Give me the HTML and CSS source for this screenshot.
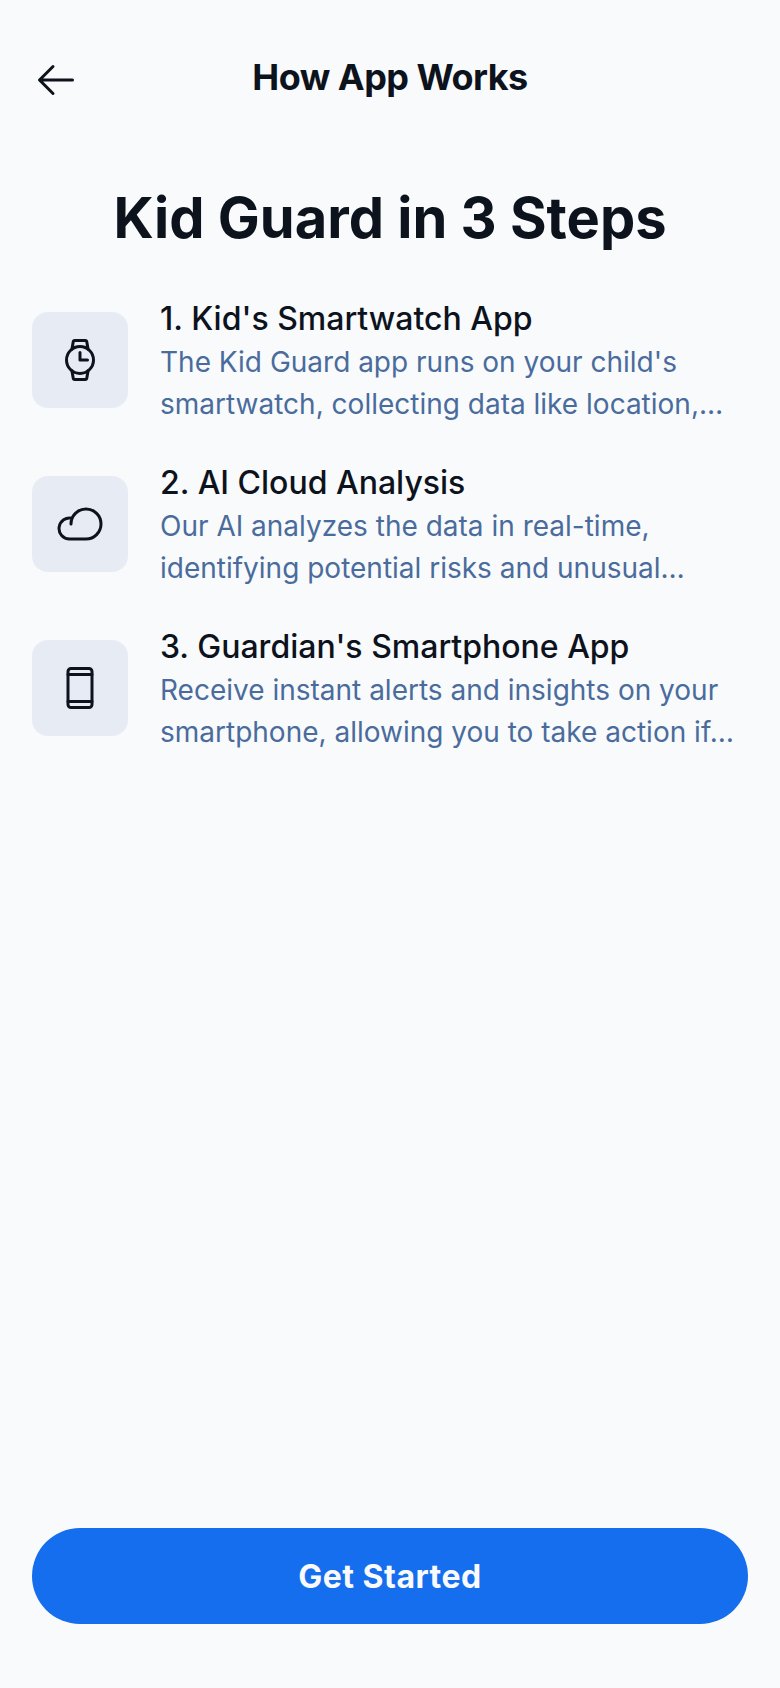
FILE: index.html
```html
<!DOCTYPE html>
<html lang="en">
<head>
<meta charset="utf-8">
<title>How App Works</title>
<link rel="stylesheet" href="styles.css">
</head>
<body>
<div class="screen">
  <header class="topbar">
    <button class="back" aria-label="Back">
      <svg width="48" height="48" viewBox="0 0 256 256" fill="currentColor"><path d="M224,128a8,8,0,0,1-8,8H59.31l58.35,58.34a8,8,0,0,1-11.32,11.32l-72-72a8,8,0,0,1,0-11.32l72-72a8,8,0,0,1,11.32,11.32L59.31,120H216A8,8,0,0,1,224,128Z"/></svg>
    </button>
    <h2 class="topbar-title">How App Works</h2>
  </header>
  <h1 class="headline">Kid Guard in 3 Steps</h1>
  <main>
    <section class="step">
      <div class="tile"><svg width="48" height="48" viewBox="0 0 256 256" fill="none" stroke="currentColor" stroke-width="16" stroke-linecap="round" stroke-linejoin="round"><circle cx="128" cy="128" r="72"/><path d="M128 88v40h40M85 70l7-39a8 8 0 0 1 8-7h56a8 8 0 0 1 8 7l7 39M85 186l7 39a8 8 0 0 0 8 7h56a8 8 0 0 0 8-7l7-39"/></svg></div>
      <div class="step-text">
        <p class="step-title">1. Kid's Smartwatch App</p>
        <p class="step-body">The Kid Guard app runs on your child's<br>smartwatch, collecting data like location,…</p>
      </div>
    </section>
    <section class="step">
      <div class="tile"><svg width="48" height="48" viewBox="0 0 256 256" fill="none" stroke="currentColor" stroke-width="16" stroke-linecap="round" stroke-linejoin="round"><path d="M80 128a80 80 0 1 1 80 80H72a56 56 0 1 1 13.9-110.3"/></svg></div>
      <div class="step-text">
        <p class="step-title">2. AI Cloud Analysis</p>
        <p class="step-body">Our AI analyzes the data in real-time,<br>identifying potential risks and unusual…</p>
      </div>
    </section>
    <section class="step">
      <div class="tile"><svg width="48" height="48" viewBox="0 0 256 256" fill="none" stroke="currentColor" stroke-width="16" stroke-linecap="round" stroke-linejoin="round"><rect x="64" y="24" width="128" height="208" rx="16"/><path d="M64 56h128M64 200h128"/></svg></div>
      <div class="step-text">
        <p class="step-title">3. Guardian's Smartphone App</p>
        <p class="step-body">Receive instant alerts and insights on your<br>smartphone, allowing you to take action if…</p>
      </div>
    </section>
  </main>
  <footer class="footer"><button class="cta">Get Started</button></footer>
</div>
</body>
</html>
```
FILE: styles.css
```css
* { box-sizing: border-box; margin: 0; }
body { background: #f9fafc; color: #0d131c; font-family: Inter, sans-serif; }
button { border: 0; padding: 0; font: inherit; color: inherit; background: none; }
svg { display: block; }
.screen { display: flex; flex-direction: column; height: 1688px; }
.topbar { display: flex; align-items: center; justify-content: space-between; padding: 32px 32px 16px; }
.back { display: flex; align-items: center; width: 96px; height: 96px; }
.topbar-title { flex: 1; padding-right: 96px; text-align: center; font-size: 36px; line-height: 45px; font-weight: 700; letter-spacing: -0.54px; padding-bottom: 5px; }
.headline { padding: 39px 32px 25px; text-align: center; font-size: 56px; line-height: 70px; font-weight: 700; letter-spacing: 0; }
.step { display: flex; align-items: center; gap: 32px; height: 164px; padding: 16px 32px; }
.tile { display: flex; align-items: center; justify-content: center; flex: none; width: 96px; height: 96px; border-radius: 16px; background: #e7ecf4; }
.step-text { padding-bottom: 1px; }
.step-title { font-size: 32px; line-height: 50px; font-weight: 500; white-space: nowrap; }
.step-body { margin-top: -3px; font-size: 28px; line-height: 42px; color: #496c9c; white-space: nowrap; }
.footer { margin-top: auto; padding: 0 32px 64px; }
.cta { display: block; width: 100%; height: 96px; padding-top: 2px; border-radius: 48px; background: #156eed; color: #f9fafc; font-size: 32px; line-height: 48px; font-weight: 700; letter-spacing: 0.48px; }
```
